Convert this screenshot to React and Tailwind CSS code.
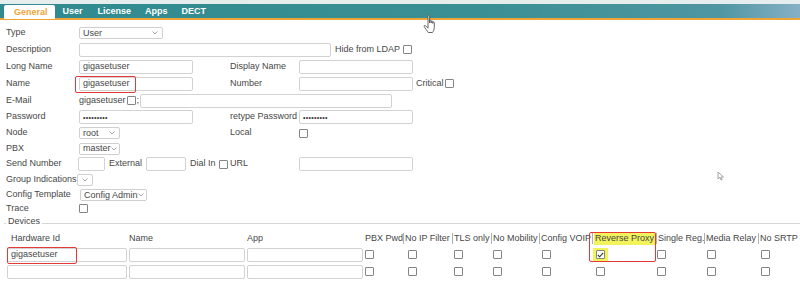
import React from 'react';

const Chevron = () => (
  <svg width="6" height="4" viewBox="0 0 6 4" className="shrink-0">
    <polyline points="0.5,0.5 3,3 5.5,0.5" fill="none" stroke="#9a9a9a" strokeWidth="0.9" />
  </svg>
);

function Select({ w, value }) {
  return (
    <div className={`h-[12px] ${w} border border-[#cfcfcf] rounded-[2px] bg-white flex items-center justify-between pl-[3px] pr-[4px] leading-none whitespace-nowrap`}>
      <span>{value}</span>
      <Chevron />
    </div>
  );
}

function Input({ w, children, className = '' }) {
  return (
    <div className={`h-[14px] ${w} border border-[#d2d2d2] rounded-[2px] bg-white flex items-center px-[3px] leading-none ${className}`}>
      {children}
    </div>
  );
}

function Check({ checked, className = '' }) {
  return (
    <div className={`w-[9px] h-[9px] border border-[#858585] rounded-[1px] bg-white flex items-center justify-center shrink-0 ${className}`}>
      {checked && (
        <svg width="7" height="6" viewBox="0 0 7 6">
          <polyline points="0.8,3 2.7,4.8 6.2,0.8" fill="none" stroke="#333" strokeWidth="1.1" />
        </svg>
      )}
    </div>
  );
}

const Dots = () => <span className="text-[7px] tracking-[0.3px] text-[#333]">•••••••••</span>;

function Row({ h, children }) {
  return <div className={`flex items-center whitespace-nowrap ${h}`}>{children}</div>;
}

const Label = ({ children }) => <div className="w-[73px] shrink-0 whitespace-nowrap">{children}</div>;
const Label2 = ({ children }) => <div className="w-[69px] shrink-0 whitespace-nowrap">{children}</div>;

const columns = [
  { name: 'PBX Pwd', w: 'w-[40px]', cb: 'ml-[2px]', div: false },
  { name: 'No IP Filter', w: 'w-[49px]', cb: 'ml-[5px]', div: true },
  { name: 'TLS only', w: 'w-[39px]', cb: 'ml-[2px]', div: true },
  { name: 'No Mobility', w: 'w-[48px]', cb: 'ml-[2px]', div: true },
  { name: 'Config VOIP', w: 'w-[53px]', cb: 'ml-[3px]', div: true },
  { name: 'Reverse Proxy', w: 'w-[64px]', cb: 'ml-[4px]', div: true, mark: true },
  { name: 'Single Reg.', w: 'w-[48px]', cb: 'ml-[1px]', div: true },
  { name: 'Media Relay', w: 'w-[54px]', cb: 'ml-[3px]', div: true },
  { name: 'No SRTP', w: 'w-[42px]', cb: 'ml-[3px]', div: true },
];

function DeviceRow({ first }) {
  return (
    <div className="flex items-center h-[17px]">
      <div className="w-[121px] shrink-0 relative">
        <Input w="w-[120px]">{first ? 'gigasetuser' : ''}</Input>
        {first && <div className="absolute left-0 top-[-1px] w-[70px] h-[17px] border border-[#e53935] rounded-[2px]" />}
      </div>
      <div className="w-[118px] shrink-0 pl-[1px]">
        <Input w="w-[116px]" />
      </div>
      <div className="w-[117px] shrink-0 pl-[1px]">
        <Input w="w-[116px]" />
      </div>
      {columns.map((c) => (
        <div key={c.name} className={`${c.w} shrink-0 flex items-center`}>
          {c.mark && first ? (
            <div className="ml-[1px] w-[15px] h-[13px] bg-[#f2f25a] flex items-center justify-center">
              <Check checked />
            </div>
          ) : (
            <Check className={c.cb} />
          )}
        </div>
      ))}
    </div>
  );
}

export default function App() {
  return (
    <div className="relative w-[800px] h-[284px] overflow-hidden bg-white text-[9px] text-[#474747] font-['Liberation_Sans',Arial,sans-serif]">
      {/* Tab bar */}
      <div className="bg-[#e6eded] pt-[4px]">
        <div className="h-[16px] flex items-end pl-[4px] bg-[linear-gradient(90deg,#2f8a8f_0%,#3a8f94_60%,#4f96a2_90%,#86b0c6_100%)] border-b-[2px] border-[#eea437] text-[9px] font-bold text-white leading-none">
          <div className="h-[14px] -mb-[1px] bg-white rounded-t-[2px] pl-[10px] pr-[7px] flex items-center text-[#eea437]">General</div>
          <div className="h-[14px] flex items-center ml-[8px]">User</div>
          <div className="h-[14px] flex items-center ml-[15px]">License</div>
          <div className="h-[14px] flex items-center ml-[14px]">Apps</div>
          <div className="h-[14px] flex items-center ml-[14px]">DECT</div>
        </div>
      </div>

      {/* Form */}
      <div className="pl-[6px] pt-[5px]">
        <Row h="h-[16px]">
          <Label>Type</Label>
          <Select w="w-[84px]" value="User" />
        </Row>
        <Row h="h-[17px]">
          <Label>Description</Label>
          <Input w="w-[252px]" />
          <span className="ml-[4px]">Hide from LDAP</span>
          <Check className="ml-[3px]" />
        </Row>
        <Row h="h-[17px]">
          <Label>Long Name</Label>
          <div className="w-[151px] shrink-0">
            <Input w="w-[114px]">gigasetuser</Input>
          </div>
          <Label2>Display Name</Label2>
          <Input w="w-[114px]" />
        </Row>
        <Row h="h-[17px]">
          <Label>Name</Label>
          <div className="w-[151px] shrink-0 relative">
            <Input w="w-[114px]">gigasetuser</Input>
            <div className="absolute left-[-4px] top-[-1px] w-[61px] h-[17px] border border-[#e53935] rounded-[2px]" />
          </div>
          <Label2>Number</Label2>
          <Input w="w-[114px]" />
          <span className="ml-[3px]">Critical</span>
          <Check className="ml-[1px]" />
        </Row>
        <Row h="h-[17px]">
          <Label>E-Mail</Label>
          <span>gigasetuser</span>
          <Check className="w-[8px] h-[8px] ml-[1px]" />
          <span className="ml-[1px]">;</span>
          <Input w="w-[252px]" className="ml-[1px]" />
        </Row>
        <Row h="h-[16px]">
          <Label>Password</Label>
          <div className="w-[151px] shrink-0">
            <Input w="w-[114px]"><Dots /></Input>
          </div>
          <Label2>retype Password</Label2>
          <Input w="w-[114px]"><Dots /></Input>
        </Row>
        <Row h="h-[16px]">
          <Label>Node</Label>
          <div className="w-[151px] shrink-0">
            <Select w="w-[41px]" value="root" />
          </div>
          <Label2>Local</Label2>
          <Check />
        </Row>
        <Row h="h-[15px]">
          <Label>PBX</Label>
          <Select w="w-[41px]" value="master" />
        </Row>
        <Row h="h-[16px]">
          <Label>Send Number</Label>
          <Input w="w-[27px]" className="-ml-[1px]" />
          <span className="ml-[4px] w-[37px] shrink-0">External</span>
          <Input w="w-[40px]" />
          <span className="ml-[4px] w-[29px] shrink-0">Dial In</span>
          <Check />
          <span className="ml-[2px] w-[69px] shrink-0">URL</span>
          <Input w="w-[114px]" />
        </Row>
        <Row h="h-[16px]">
          <Label>Group Indications</Label>
          <Select w="w-[16px] -ml-[2px] justify-end" value="" />
        </Row>
        <Row h="h-[14px]">
          <Label>Config Template</Label>
          <Select w="w-[67px] ml-[1px]" value="Config Admin" />
        </Row>
        <Row h="h-[13px]">
          <Label>Trace</Label>
          <Check />
        </Row>
      </div>

      {/* Devices */}
      <div className="relative mt-[8px] ml-[4px] border-t border-[#d6d6d6] h-[0px]">
        <span className="absolute left-[2px] top-[-7px] bg-white px-[2px] leading-none">Devices</span>
      </div>

      <div className="pl-[7px] pt-[7px]">
        <div className="flex items-center h-[15px] whitespace-nowrap">
          <div className="w-[121px] shrink-0 pl-[4px]">Hardware Id</div>
          <div className="w-[118px] shrink-0 pl-[1px]">Name</div>
          <div className="w-[117px] shrink-0 pl-[1px]">App</div>
          {columns.map((c) => (
            <div key={c.name} className={`${c.w} shrink-0 flex items-center`}>
              {c.div && <span className="w-[1px] h-[11px] bg-[#b0b0b0] shrink-0" />}
              <span
                className={
                  c.mark
                    ? 'ml-[1px] px-[1px] h-[12px] flex items-center bg-[#f2f25a]'
                    : c.div
                    ? 'ml-[1px]'
                    : 'ml-[2px]'
                }
              >
                {c.name}
              </span>
            </div>
          ))}
        </div>
        <DeviceRow first />
        <DeviceRow />
      </div>

      {/* Annotation: red box around Reverse Proxy */}
      <div className="absolute left-[589px] top-[232px] w-[67px] h-[30px] border border-[#e53935] rounded-[2px]" />

      {/* Hand cursor */}
      <svg className="absolute left-[423px] top-[14px]" width="16" height="20" viewBox="0 0 16 20">
        <path
          d="M5 1.5c0-.8 1.6-.8 1.6 0V9V6.8c0-.8 1.6-.8 1.6 0V9V7.6c0-.8 1.6-.8 1.6 0V9.4V8.6c0-.8 1.5-.8 1.5 0v4.6c0 2.4-1.2 4.3-1.8 5.3H5.3C4.4 17.3 1.6 13.6 1.2 12.6c-.4-1 .6-1.6 1.3-.9L5 14.2Z"
          fill="#fff"
          stroke="#555"
          strokeWidth="0.9"
          strokeLinejoin="round"
        />
      </svg>

      {/* Arrow cursor */}
      <svg className="absolute left-[717px] top-[171px]" width="8" height="10" viewBox="0 0 8 10">
        <path d="M1 1v7l1.8-1.6 1.3 2.6 1.1-.5-1.3-2.5H6.5Z" fill="#fff" stroke="#8a8a8a" strokeWidth="0.8" strokeLinejoin="round" />
      </svg>
    </div>
  );
}
